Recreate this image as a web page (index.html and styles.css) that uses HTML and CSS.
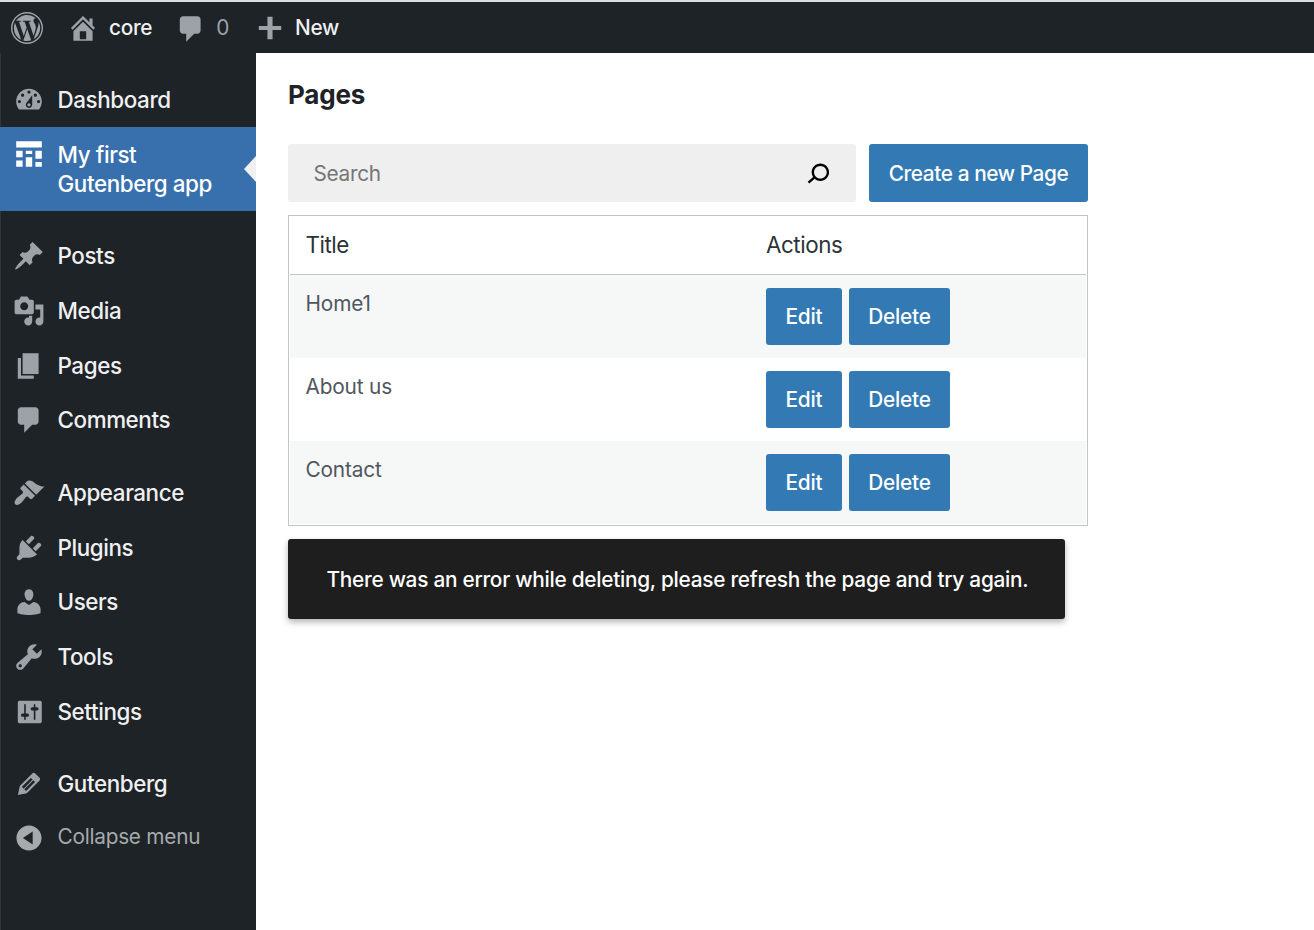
FILE: index.html
```html
<!DOCTYPE html>
<html lang="en">
<head>
<meta charset="utf-8">
<title>Pages</title>
<link rel="stylesheet" href="styles.css">
</head>
<body>
<header class="adminbar">
  <svg class="icon wp-logo" viewBox="0 0 20 20"><circle cx="10" cy="10" r="9.55" fill="none" stroke="currentColor" stroke-width=".9"/><path d="M1.8 10c0-1.2.25-2.3.7-3.35l3.9 10.7A8.2 8.2 0 0 1 1.8 10zM15.5 9.6c0-1-.36-1.7-.67-2.25-.42-.67-.8-1.24-.8-1.92 0-.75.57-1.45 1.37-1.45h.1A8.2 8.2 0 0 0 3.15 5.5l.53.01c.86 0 2.19-.1 2.19-.1.44-.03.5.62.05.68 0 0-.44.05-.94.07l3 8.9 1.8-5.4-1.28-3.5c-.44-.03-.86-.08-.86-.08-.45-.02-.4-.7.04-.67 0 0 1.36.1 2.17.1.86 0 2.19-.1 2.19-.1.44-.03.5.62.05.68 0 0-.45.05-.94.07l2.97 8.84.82-2.74c.37-1.14.56-1.95.56-2.66zM10.14 10.7l-2.46 7.15a8.2 8.2 0 0 0 5.04-.13l-.06-.11zM17.2 6.06c.03.27.05.55.05.85 0 .83-.16 1.77-.62 2.95l-2.5 7.23A8.2 8.2 0 0 0 17.2 6.06z"/></svg>
  <span class="bar-item site"><svg class="icon" viewBox="0 0 20 20"><path d="M16 8.5l1.53 1.53-1.06 1.06L10 4.6l-6.47 6.47-1.06-1.06L10 2.47l4 4V4h2v4.5zm-6-2.46l6 5.99V18H4v-5.97zM12 17v-5H8v5h4z"/></svg><span class="label">core</span></span>
  <span class="bar-item notes"><svg class="icon" viewBox="0 0 20 20"><path d="M5 2h9c1.1 0 2 .9 2 2v7c0 1.1-.9 2-2 2h-2l-5 5v-5H5c-1.1 0-2-.9-2-2V4c0-1.1.9-2 2-2z"/></svg><span class="label count">0</span></span>
  <span class="bar-item new"><svg class="icon" viewBox="0 0 20 20"><path d="M17 8.7v2.6h-5.400V17H8.400v-5.700H3V8.700h5.400V3h3.200v5.700z"/></svg><span class="label">New</span></span>
</header>
<div class="shell">
  <nav class="menu">
    <a class="item first"><svg class="icon" viewBox="0 0 20 20"><path fill-rule="evenodd" d="M3.76 16h12.48c1.1-1.37 1.76-3.11 1.76-5 0-4.42-3.58-8-8-8s-8 3.58-8 8c0 1.89.66 3.63 1.76 5zM10 4c.55 0 1 .45 1 1s-.45 1-1 1-1-.45-1-1 .45-1 1-1zM6 6c.55 0 1 .45 1 1s-.45 1-1 1-1-.45-1-1 .45-1 1-1zm8 0c.55 0 1 .45 1 1s-.45 1-1 1-1-.45-1-1 .45-1 1-1zm-5.37 5.55L12 7v6c0 1.1-.9 2-2 2s-2-.9-2-2c0-.57.24-1.08.63-1.45zM4 10c.55 0 1 .45 1 1s-.45 1-1 1-1-.45-1-1 .45-1 1-1zm12 0c.55 0 1 .45 1 1s-.45 1-1 1-1-.45-1-1 .45-1 1-1zm-5 3c0-.55-.45-1-1-1s-1 .45-1 1 .45 1 1 1 1-.45 1-1z"/></svg><span>Dashboard</span></a>
    <a class="item current"><svg class="icon" viewBox="0 0 20 20"><path d="M2 2h16v4H2V2zm0 10V8h4v4H2zm6-2V8h4v2H8zm6 3V8h4v5h-4zm-6 5v-6h4v6H8zm-6 0v-4h4v4H2zm12 0v-3h4v3h-4z"/></svg><span>My first<br>Gutenberg app</span></a>
    <a class="item group posts"><svg class="icon" viewBox="0 0 20 20"><path d="M10.44 3.02l1.82-1.82 6.36 6.35-1.83 1.82c-1.05-.68-2.48-.57-3.41.36l-.75.75c-.92.93-1.04 2.35-.35 3.41l-1.83 1.82-2.41-2.41-2.8 2.79c-.42.42-3.38 2.71-3.8 2.29s1.86-3.39 2.28-3.81l2.79-2.79L4.1 9.36l1.83-1.82c1.05.69 2.48.57 3.4-.36l.75-.75c.93-.92 1.05-2.35.36-3.41z"/></svg><span>Posts</span></a>
    <a class="item"><svg class="icon" viewBox="0 0 20 20"><path fill-rule="evenodd" d="M13 11V4c0-.55-.45-1-1-1h-1.67L9 1H5L3.67 3H2c-.55 0-1 .45-1 1v7c0 .55.45 1 1 1h10c.55 0 1-.45 1-1zM7 4.5c1.38 0 2.5 1.12 2.5 2.5S8.38 9.5 7 9.5 4.5 8.38 4.5 7 5.62 4.5 7 4.5zM14 6h5v10.5c0 1.38-1.12 2.5-2.5 2.5S14 17.88 14 16.5s1.12-2.5 2.5-2.5c.17 0 .34.02.5.05V9h-3V6zm-4 8.05V13h2v3.5c0 1.38-1.12 2.5-2.5 2.5S7 17.88 7 16.5 8.12 14 9.5 14c.17 0 .34.02.5.05z"/></svg><span>Media</span></a>
    <a class="item"><svg class="icon" viewBox="0 0 20 20"><path d="M6 15V2h10v13H6zm-1 1h8v2H3V5h2v11z"/></svg><span>Pages</span></a>
    <a class="item"><svg class="icon" viewBox="0 0 20 20"><path d="M5 2h9c1.1 0 2 .9 2 2v7c0 1.1-.9 2-2 2h-2l-5 5v-5H5c-1.1 0-2-.9-2-2V4c0-1.1.9-2 2-2z"/></svg><span>Comments</span></a>
    <a class="item group"><svg class="icon" viewBox="0 0 20 20"><path d="M14.48 11.06L7.41 3.99l1.5-1.5c.5-.56 2.3-.47 3.51.32 1.21.8 1.43 1.28 2.91 2.1 1.18.64 2.45 1.26 4.45.85zm-.71.71L6.7 4.7 4.93 6.47c-.39.39-.39 1.02 0 1.41l1.06 1.06c.39.39.39 1.03 0 1.42-.6.6-1.43 1.11-2.21 1.69-.35.26-.7.53-1.01.84C1.43 14.23.4 16.08 1.4 17.07c.99 1 2.84-.03 4.18-1.36.31-.31.58-.66.85-1.02.57-.78 1.08-1.61 1.69-2.21.39-.39 1.02-.39 1.41 0l1.06 1.06c.39.39 1.02.39 1.41 0z"/></svg><span>Appearance</span></a>
    <a class="item"><svg class="icon" viewBox="0 0 20 20"><path d="M13.11 4.36L9.87 7.6 8 5.73l3.24-3.24c.35-.34 1.05-.2 1.56.32.52.51.66 1.21.31 1.55zm-8 1.77l.91-1.12 9.01 9.01-1.19.84c-.71.71-2.63 1.16-3.82 1.16H6.14L4.9 17.26c-.59.59-1.54.59-2.12 0-.59-.58-.59-1.53 0-2.12l1.24-1.24v-3.88c0-1.13.4-3.19 1.09-3.89zm7.26 3.97l3.24-3.24c.34-.35 1.04-.21 1.55.31.52.51.66 1.21.31 1.55l-3.24 3.25z"/></svg><span>Plugins</span></a>
    <a class="item"><svg class="icon" viewBox="0 0 20 20"><path d="M10 9.25c-2.27 0-2.73-3.44-2.73-3.44C7 4.02 7.82 2 9.97 2c2.16 0 2.98 2.02 2.71 3.81 0 0-.41 3.44-2.68 3.44zm0 2.57L12.72 10c2.39 0 4.52 2.33 4.52 4.53v2.49s-3.65 1.13-7.24 1.13c-3.65 0-7.24-1.13-7.24-1.13v-2.49c0-2.25 1.94-4.48 4.47-4.48z"/></svg><span>Users</span></a>
    <a class="item"><svg class="icon" viewBox="0 0 20 20"><path fill-rule="evenodd" d="M16.68 9.77c-1.34 1.34-3.3 1.67-4.95.99l-5.41 6.52c-.99.99-2.59.99-3.58 0s-.99-2.59 0-3.57l6.52-5.42c-.68-1.65-.35-3.61.99-4.95 1.28-1.28 3.12-1.62 4.72-1.06l-2.89 2.89 2.82 2.82 2.86-2.87c.53 1.58.18 3.39-1.08 4.65zM3.81 16.21c.4.39 1.04.39 1.43 0 .4-.4.4-1.04 0-1.43-.39-.4-1.03-.4-1.43 0-.39.39-.39 1.03 0 1.43z"/></svg><span>Tools</span></a>
    <a class="item"><svg class="icon" viewBox="0 0 20 20"><path fill-rule="evenodd" d="M18 16V4c0-.55-.45-1-1-1H4c-.55 0-1 .45-1 1v12c0 .55.45 1 1 1h13c.55 0 1-.45 1-1zM8 11h1c.55 0 1 .45 1 1s-.45 1-1 1H8v1.5c0 .28-.22.5-.5.5s-.5-.22-.5-.5V13H6c-.55 0-1-.45-1-1s.45-1 1-1h1V5.5c0-.28.22-.5.5-.5s.5.22.5.5V11zm5-2h-1c-.55 0-1-.45-1-1s.45-1 1-1h1V5.5c0-.28.22-.5.5-.5s.5.22.5.5V7h1c.55 0 1 .45 1 1s-.45 1-1 1h-1v5.5c0 .28-.22.5-.5.5s-.5-.22-.5-.5V9z"/></svg><span>Settings</span></a>
    <a class="item group gutenberg"><svg class="icon" viewBox="0 0 20 20"><path fill-rule="evenodd" d="M13.89 3.39l2.71 2.72c.46.46.42 1.24.03 1.64l-8.01 8.02-5.56 1.16 1.16-5.58s7.6-7.63 7.99-8.03c.39-.39 1.22-.39 1.68.07zm-2.73 2.79l-5.59 5.61 1.11 1.11 5.54-5.65zm-2.97 8.23l5.58-5.6-1.07-1.08-5.59 5.6z"/></svg><span>Gutenberg</span></a>
    <a class="item collapse"><svg class="icon" viewBox="0 0 20 20"><path fill-rule="evenodd" d="M10 2.16c4.33 0 7.84 3.51 7.84 7.84s-3.51 7.84-7.84 7.84S2.16 14.33 2.16 10 5.71 2.16 10 2.16zm2.3 11.9V6L6.180 9.970z"/></svg><span>Collapse menu</span></a>
  </nav>
  <main class="content">
    <h1 class="title">Pages</h1>
    <div class="toolbar">
      <div class="search"><span>Search</span><svg class="search-icon" viewBox="0 0 24 24"><path d="M13.5 6C10.5 6 8 8.500 8 11.500c0 1.100.3 2.100.9 3l-3.400 3 1 1.100 3.400-2.900c1 .9 2.200 1.400 3.600 1.400 3 0 5.500-2.500 5.500-5.500C19 8.500 16.500 6 13.500 6zm0 9.500c-2.200 0-4-1.800-4-4s1.800-4 4-4 4 1.800 4 4-1.800 4-4 4z"/></svg></div>
      <button class="btn create">Create a new Page</button>
    </div>
    <div class="table">
      <div class="row head"><span>Title</span><span>Actions</span></div>
      <div class="row striped"><span class="name">Home1</span><div class="actions"><button class="btn edit">Edit</button><button class="btn delete">Delete</button></div></div>
      <div class="row"><span class="name">About us</span><div class="actions"><button class="btn edit">Edit</button><button class="btn delete">Delete</button></div></div>
      <div class="row striped"><span class="name">Contact</span><div class="actions"><button class="btn edit">Edit</button><button class="btn delete">Delete</button></div></div>
    </div>
    <div class="snackbar">There was an error while deleting, please refresh the page and try again.</div>
  </main>
</div>
</body>
</html>
```
FILE: styles.css
```css
* { box-sizing: border-box; }
body {
  margin: 0;
  height: 930px;
  overflow: hidden;
  display: flex;
  flex-direction: column;
  background: #fff;
  font-family: Inter, "Liberation Sans", sans-serif;
  font-size: 20.8px;
  letter-spacing: -0.15px;
}
.icon { width: 32px; height: 32px; flex: none; fill: currentColor; color: #9ca2a7; }
.adminbar {
  height: 53px;
  flex: none;
  display: flex;
  align-items: center;
  padding: 1px 0 0 11px;
  border-top: 2px solid #dcdfe0;
  background: #1d2327;
  color: #f0f0f1;
  font-weight: 450;
  letter-spacing: -0.3px;
}
.bar-item { display: flex; align-items: center; }
.label { padding-bottom: 1px; }
.site { margin-left: 24px; gap: 10px; }
.notes { margin-left: 24px; gap: 9px; color: #9ca2a7; }
.notes .icon { margin: 1px 0 -1px -1px; }
.count { font-weight: 400; }
.new { margin-left: 25px; gap: 9px; }
.shell { flex: 1; display: flex; min-height: 0; }
.menu {
  width: 256px;
  flex: none;
  padding-top: 20px;
  background: #1d2327;
  color: #f0f0f1;
  border-left: 1px solid #2f3539;
}
.item {
  display: flex;
  align-items: flex-start;
  gap: 12.5px;
  height: 54.7px;
  padding: 11px 0 0 12px;
  font-size: 22.4px;
  font-weight: 450;
  line-height: 32px;
  letter-spacing: -0.4px;
}
.first { height: 54px; }
.current {
  position: relative;
  height: 84px;
  background: #3870ad;
  color: #fff;
  line-height: 29px;
  padding-top: 13px;
  margin-left: -1px;
  padding-left: 13px;
}
.current .icon { color: #fff; margin-top: -2px; }
.current::after {
  content: "";
  position: absolute;
  right: 0;
  top: 29px;
  border: 13px solid transparent;
  border-left-width: 0;
  border-right: 12px solid #f0f0f1;
}
.group { margin-top: 18px; }
.posts { margin-top: 18.25px; }
.gutenberg { margin-top: 17.8px; }
.collapse { font-size: 20.8px; font-weight: 400; letter-spacing: -0.25px; color: #a7aaad; padding-top: 9px; }
.collapse .icon { color: #a7aaad; margin-top: 1px; }
.content { padding: 26px 0 0 32px; width: 832px; }
.title { margin: 0; font-size: 26px; line-height: 32px; font-weight: 650; letter-spacing: -0.2px; color: #1d2327; }
.toolbar { display: flex; gap: 13px; margin-top: 33px; height: 58px; }
.search {
  width: 568px;
  display: flex;
  align-items: center;
  justify-content: space-between;
  padding: 0 19.5px 0 25.5px;
  border-radius: 3px;
  background: #efefef;
  color: #757575;
  letter-spacing: -0.3px;
}
.search-icon { width: 38px; height: 38px; fill: #000; }
.btn {
  border: 0;
  padding: 0;
  border-radius: 3px;
  background: #337ab5;
  color: #fff;
  font: inherit;
  font-weight: 450;
  letter-spacing: -0.2px;
  white-space: nowrap;
}
.create { width: 219px; letter-spacing: -0.4px; }
.table { margin-top: 13px; width: 800px; border: 1px solid #c3c4c7; padding: 0 1px 1px; }
.row { height: 83px; display: grid; grid-template-columns: 460.5px 1fr; padding: 13px 15.5px 0; color: #50575e; }
.head { height: 59px; font-size: 22.4px; line-height: 32px; letter-spacing: -0.45px; border-bottom: 1px solid #c3c4c7; color: #2c3338; }
.striped { background: #f6f7f7; }
.name { line-height: 32px; }
.actions { display: flex; gap: 7px; }
.actions .btn { height: 57px; }
.edit { width: 76px; }
.delete { width: 101px; }
.snackbar {
  margin-top: 13px;
  width: 777px;
  height: 80px;
  padding: 0 0 0 38.5px;
  display: flex;
  align-items: center;
  white-space: nowrap;
  border-radius: 3px;
  background: #1e1e1e;
  color: #fff;
  font-weight: 450;
  letter-spacing: -0.26px;
  box-shadow: 0 3px 6px rgba(0, 0, 0, .3);
}
```
